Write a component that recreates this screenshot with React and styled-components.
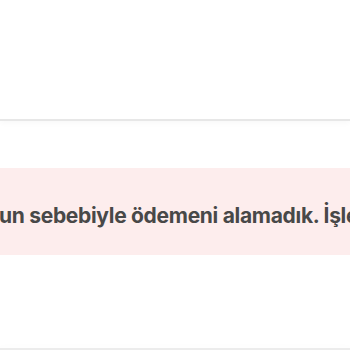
import React from 'react';
import styled, {createGlobalStyle} from 'styled-components';

const GlobalStyle = createGlobalStyle`
  html, body {
    margin: 0;
    padding: 0;
    background: #ffffff;
    overflow: hidden;
  }
  body {
    font-family: Inter, "Noto Sans", sans-serif;
  }
`;

const Page = styled.div`
  width: 350px;
  height: 350px;
  display: flex;
  flex-direction: column;
  overflow: hidden;
`;

const Header = styled.div`
  height: 119px;
  flex-shrink: 0;
  border-bottom: 2px solid #e7e7e7;
  box-shadow: 0 2px 6px rgba(0, 0, 0, .03);
`;

const Content = styled.div`
  flex: 1;
  padding-top: 47px;
`;

const Alert = styled.div`
  height: 87px;
  background: #fdeded;
  display: flex;
  align-items: flex-end;
  padding-bottom: 27px;
  box-sizing: border-box;
  overflow: hidden;
`;

const Message = styled.p`
  margin: 0 0 0 -1px;
  white-space: nowrap;
  font-size: 21px;
  font-weight: 700;
  color: #484848;
  letter-spacing: -0.3px;
`;

const Footer = styled.div`
  height: 2px;
  flex-shrink: 0;
  background: #ececec;
  box-shadow: 0 -2px 4px rgba(0, 0, 0, .02);
`;

const App = () => {
  return (
    <Page>
      <GlobalStyle/>
      <Header/>
      <Content>
        <Alert>
          <Message>un sebebiyle ödemeni alamadık. İşlemini tekrar dene.</Message>
        </Alert>
      </Content>
      <Footer/>
    </Page>
  );
};

export default App;
